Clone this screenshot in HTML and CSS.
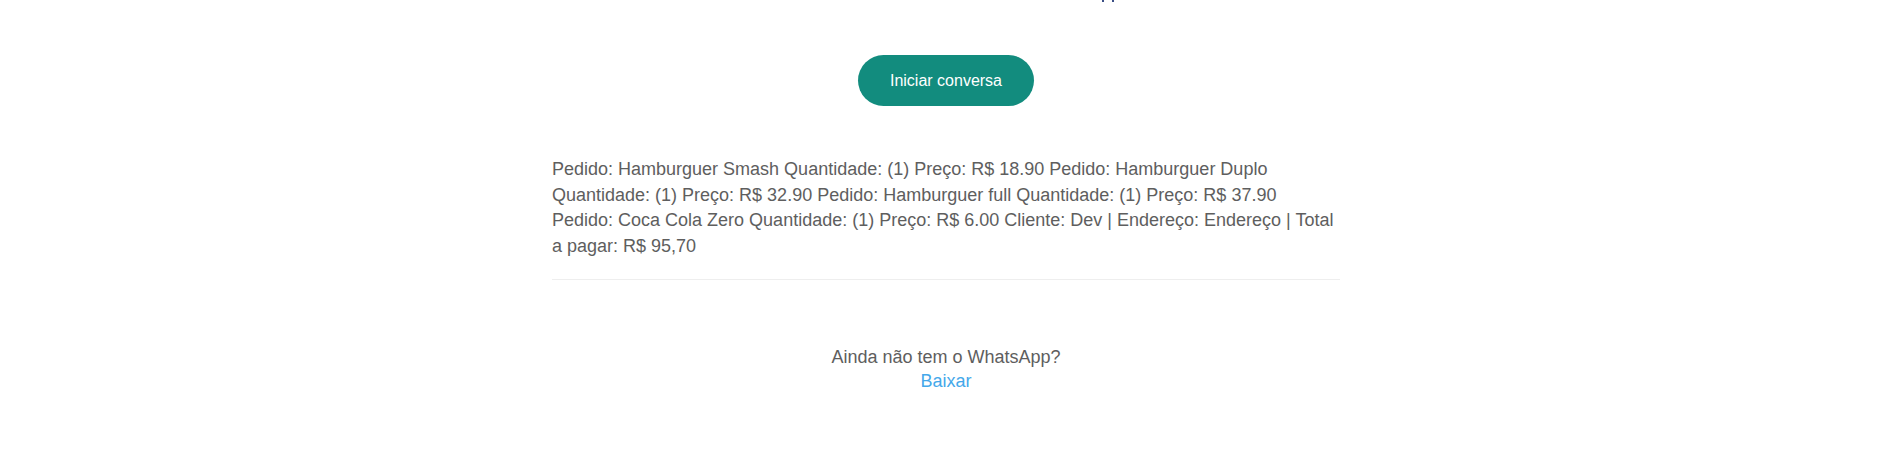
FILE: index.html
```html
<!DOCTYPE html>
<html lang="pt-BR">
<head>
<meta charset="utf-8">
<title>Iniciar conversa</title>
<link rel="stylesheet" href="styles.css">
</head>
<body>
<main class="page">
  <div class="lead-tail" aria-hidden="true"><span class="tick"></span><span class="tick"></span></div>
  <div class="action">
    <a class="btn" href="#">Iniciar conversa</a>
  </div>
  <section class="order">
    <p class="order-text">Pedido: Hamburguer Smash Quantidade: (1) Preço: R$ 18.90 Pedido: Hamburguer Duplo Quantidade: (1) Preço: R$ 32.90 Pedido: Hamburguer full Quantidade: (1) Preço: R$ 37.90 Pedido: Coca Cola Zero Quantidade: (1) Preço: R$ 6.00 Cliente: Dev | Endereço: Endereço | Total a pagar: R$ 95,70</p>
    <hr class="divider">
  </section>
  <section class="download">
    <p class="download-text">Ainda não tem o WhatsApp?</p>
    <a class="download-link" href="#">Baixar</a>
  </section>
</main>
</body>
</html>
```

FILE: styles.css
```css
html, body {
  margin: 0;
  padding: 0;
  background: #ffffff;
}

body {
  font-family: "Liberation Sans", Arial, sans-serif;
  font-size: 18px;
  line-height: 1.42857;
  color: #5e5e5e;
  overflow: hidden;
}

.page {
  width: 788px;
  margin: 0 auto;
  padding-left: 4px;
  display: flex;
  flex-direction: column;
}

.lead-tail {
  display: flex;
  gap: 8px;
  height: 3px;
  margin-left: 550px;
}

.tick {
  width: 2px;
  height: 2px;
  background: #3b4f86;
}

.action {
  display: flex;
  justify-content: center;
  margin-top: 52px;
}

.btn {
  display: inline-block;
  background: #128c7e;
  color: #ffffff;
  font-size: 16px;
  line-height: 21px;
  padding: 15px 32px;
  border-radius: 26px;
  text-decoration: none;
}

.order {
  margin-top: 51px;
}

.order-text {
  margin: 0;
}

.divider {
  margin: 19px 0 0;
  border: 0;
  border-top: 1px solid #eeeeee;
}

.download {
  margin-top: 65px;
  display: flex;
  flex-direction: column;
  align-items: center;
  line-height: 24.5px;
}

.download-text {
  margin: 0;
}

.download-link {
  color: #44a8ea;
  text-decoration: none;
}
```
